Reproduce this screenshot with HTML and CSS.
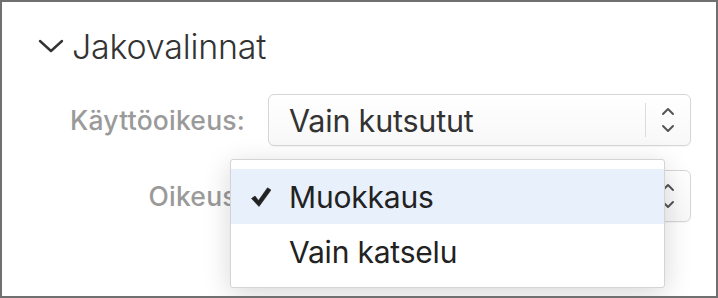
FILE: index.html
```html
<!DOCTYPE html>
<html lang="fi">
<head>
<meta charset="utf-8">
<link rel="stylesheet" href="styles.css">
</head>
<body>
<div class="panel">
  <div class="header">
    <svg class="disclosure" width="26" height="14" viewBox="0 0 26 14"><path d="M2 2 L13 12 L24 2" fill="none" stroke="#333" stroke-width="2.4" stroke-linecap="round" stroke-linejoin="round"/></svg>
    <span class="title">Jakovalinnat</span>
  </div>
  <div class="form">
    <span class="label">Käyttöoikeus:</span>
    <div class="select">
      <span class="value">Vain kutsutut</span>
      <span class="sep"></span>
      <svg class="stepper" width="14" height="28" viewBox="0 0 14 28"><path d="M2 8 L7 3 L12 8 M2 20 L7 25 L12 20" fill="none" stroke="#555" stroke-width="2" stroke-linecap="round" stroke-linejoin="round"/></svg>
    </div>
    <span class="label">Oikeus:</span>
    <div class="select">
      <span class="value"></span>
      <span class="sep"></span>
      <svg class="stepper" width="14" height="28" viewBox="0 0 14 28"><path d="M2 8 L7 3 L12 8 M2 20 L7 25 L12 20" fill="none" stroke="#555" stroke-width="2" stroke-linecap="round" stroke-linejoin="round"/></svg>
    </div>
  </div>
  <div class="menu">
    <div class="item selected">
      <svg class="check" width="20" height="20" viewBox="0 0 20 20"><path d="M0.5 11.5 L4 9 L7.5 13.5 L16.5 0.8 L20 3 L8 19.5 Z" fill="#222" stroke="#222" stroke-width="0.6" stroke-linejoin="round"/></svg>
      <span>Muokkaus</span>
    </div>
    <div class="item">
      <span class="nocheck"></span>
      <span>Vain katselu</span>
    </div>
  </div>
</div>
</body>
</html>
```

FILE: styles.css
```css
html, body {
  margin: 0;
  padding: 0;
  background: #fff;
}
body {
  font-family: Inter, "Noto Sans", sans-serif;
}
.panel {
  position: relative;
  box-sizing: border-box;
  width: 718px;
  height: 298px;
  border: 2px solid #707070;
  background: #fff;
  overflow: hidden;
}
.header {
  display: flex;
  align-items: center;
  gap: 8px;
  padding: 22px 0 0 36px;
  height: 44px;
}
.disclosure {
  display: block;
}
.title {
  font-size: 34px;
  font-weight: 300;
  color: #333;
  letter-spacing: -0.2px;
}
.form {
  display: grid;
  grid-template-columns: 243px 423px;
  column-gap: 23px;
  row-gap: 24px;
  align-items: center;
  margin-top: 26px;
}
.label {
  justify-self: end;
  font-size: 26.5px;
  font-weight: 500;
  color: #9a9a9a;
  letter-spacing: 0.2px;
}
.select {
  box-sizing: border-box;
  height: 52px;
  display: flex;
  align-items: center;
  border: 1px solid #d6d6d6;
  border-radius: 6px;
  background: linear-gradient(#ffffff, #f8f8f8);
  box-shadow: 0 1px 1px rgba(0,0,0,0.04);
  padding: 0 15px 0 20px;
}
.value {
  flex: 1;
  font-size: 30.5px;
  color: #333;
  letter-spacing: -0.2px;
}
.sep {
  width: 1px;
  height: 34px;
  background: #dcdcdc;
  margin-right: 15px;
}
.stepper {
  display: block;
}
.menu {
  position: absolute;
  left: 228px;
  top: 157px;
  width: 435px;
  box-sizing: border-box;
  padding: 9px 0 8px;
  background: #fff;
  border: 1px solid #d4d4d4;
  border-radius: 3px;
  box-shadow: 0 6px 28px rgba(0,0,0,0.16);
}
.item {
  height: 55px;
  display: flex;
  align-items: center;
  padding-left: 20px;
  gap: 18px;
  font-size: 30px;
  color: #222;
  letter-spacing: -0.2px;
}
.item.selected {
  background: #e8f0fc;
}
.check {
  display: block;
}
.nocheck {
  width: 20px;
}
```
